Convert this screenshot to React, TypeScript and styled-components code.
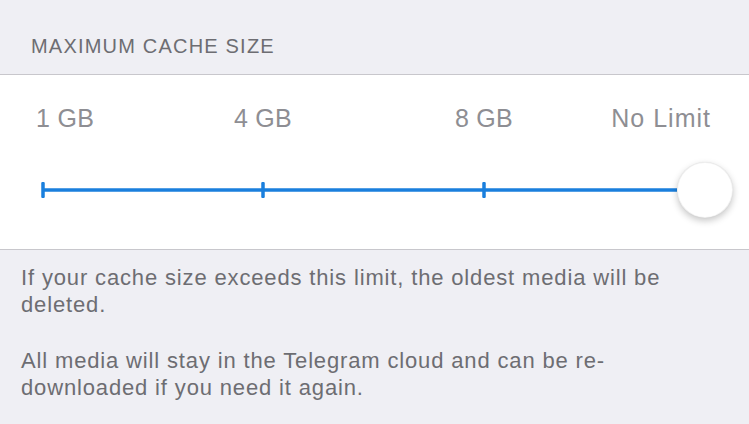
import styled, { createGlobalStyle } from "styled-components";

const GlobalStyle = createGlobalStyle`
  html, body {
    margin: 0;
    padding: 0;
    background: #efeff4;
    font-family: "Liberation Sans", Arial, sans-serif;
  }
`;

const Page = styled.div`
  width: 749px;
  height: 424px;
  overflow: hidden;
  background: #efeff4;
`;

const SectionHeader = styled.div`
  padding: 34px 0 0 31px;
  height: 74px;
  box-sizing: border-box;
  font-size: 20px;
  line-height: 24px;
  color: #6d6d72;
  letter-spacing: 1.2px;
`;

const Panel = styled.div`
  background: #fff;
  border-top: 1px solid #c8c7cc;
  border-bottom: 1px solid #c8c7cc;
  height: 176px;
  box-sizing: border-box;
  padding-top: 28px;
`;

const Labels = styled.div`
  display: grid;
  grid-template-columns: 117px 220px 222px 116px;
  padding-left: 36px;
  font-size: 25px;
  line-height: 30px;
  color: #8e8e93;
  letter-spacing: 0.3px;
`;

const Label = styled.div<{ $align: "left" | "center" | "right" }>`
  text-align: ${(p) => p.$align};
  white-space: nowrap;
  letter-spacing: ${(p) => (p.$align === "right" ? "1px" : "0.3px")};
`;

const TrackRow = styled.div`
  display: flex;
  align-items: center;
  margin-top: 29px;
  padding-left: 41px;
`;

const Thumb = styled.div`
  width: 56px;
  height: 56px;
  border-radius: 50%;
  background: #fff;
  box-sizing: border-box;
  border: 0.5px solid rgba(0, 0, 0, 0.06);
  box-shadow: 0 3px 7px rgba(0, 0, 0, 0.22), 0 0 1px rgba(0, 0, 0, 0.1);
`;

const Footer = styled.div`
  padding: 14px 40px 0 21px;
  font-size: 22px;
  line-height: 27px;
  color: #6d6d72;
  letter-spacing: 0.85px;
`;

const Paragraph = styled.p`
  margin: 0 0 29px;
`;

const ticks = [2, 222, 443];

export default function App() {
  return (
    <Page>
      <GlobalStyle />
      <SectionHeader>MAXIMUM CACHE SIZE</SectionHeader>
      <Panel>
        <Labels>
          <Label $align="left">1 GB</Label>
          <Label $align="center">4 GB</Label>
          <Label $align="center">8 GB</Label>
          <Label $align="right">No Limit</Label>
        </Labels>
        <TrackRow>
          <svg width="636" height="16" viewBox="0 0 636 16">
            <line x1="2" y1="8" x2="636" y2="8" stroke="#1a7fdd" strokeWidth="3.5" />
            {ticks.map((x) => (
              <line
                key={x}
                x1={x}
                y1="1.5"
                x2={x}
                y2="14.5"
                stroke="#1a7fdd"
                strokeWidth="3.5"
                strokeLinecap="round"
              />
            ))}
          </svg>
          <Thumb />
        </TrackRow>
      </Panel>
      <Footer>
        <Paragraph>
          If your cache size exceeds this limit, the oldest media will be deleted.
        </Paragraph>
        <Paragraph>
          All media will stay in the Telegram cloud and can be re-
          <br />
          downloaded if you need it again.
        </Paragraph>
      </Footer>
    </Page>
  );
}
